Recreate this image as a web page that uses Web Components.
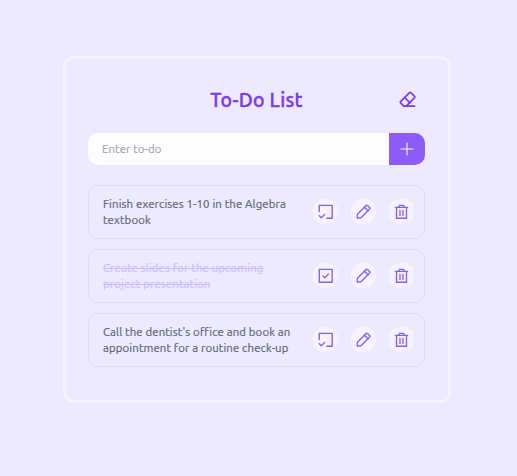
<!DOCTYPE html>
<html lang="en"><head><meta charset="utf-8"><title>To-Do List</title>
<style>body{margin:0;background:#ede9fe;font-family:Ubuntu,"Noto Sans","Open Sans",sans-serif}</style></head>
<body><todo-app></todo-app>
<script>
const icons={
open:'<path d="M2.3 8.5V2.3H15.2V15.2H9.8"/><path d="M2.3 12.8L4.3 14.7L7.6 11.5"/>',
done:'<path d="M2.3 2.3H15.2V15.2H2.3Z"/><path d="M5.9 8.9L7.8 10.7L11.5 7"/>',
edit:'<path d="M2.2 15L2.4 11.2L11.1 2.5Q11.8 1.8 12.5 2.5L14.7 4.7Q15.4 5.4 14.7 6.1L6 14.8Z"/><path d="M9.4 4.2L13 7.8"/>',
trash:'<path d="M2.3 4.3H14.7M3.5 4.5V15.2H13.5V4.5M5.8 4.1L6.5 2.3H10.5L11.2 4.1M7 7.4V12.4M10 7.4V12.4"/>',
erase:'<path d="M4.8 15.1L1.8 12.1Q.9 11.2 1.8 10.3L10.3 1.8Q11.2 .9 12.1 1.8L15.4 5.1Q16.3 6 15.4 6.9L7.3 15.1Z"/><path d="M5.6 6.5L11 11.8M7.3 15.1H15.6"/>',
plus:'<path d="M8 2V14M2 8H14"/>'};
class GlyphIcon extends HTMLElement{
 connectedCallback(){this.attachShadow({mode:'open'}).innerHTML=`<style>:host{display:block;width:17px;height:17px}svg{display:block;width:100%;height:100%;fill:none;stroke:currentColor;stroke-width:var(--stroke,1.35);stroke-linecap:round;stroke-linejoin:round}</style><svg viewBox="0 0 17 17">${icons[this.getAttribute('name')]}</svg>`}
}
customElements.define('glyph-icon',GlyphIcon);
class TextLine extends HTMLElement{
 connectedCallback(){
  this.attachShadow({mode:'open'}).innerHTML='<style>:host{display:block;width:max-content;white-space:nowrap}span{text-decoration:inherit}</style><span><slot></slot></span>';
  const natural=this.getBoundingClientRect().width,count=this.textContent.length;
  this.style.letterSpacing=(this.getAttribute('measure')-natural)/count+'px';
 }
}
customElements.define('text-line',TextLine);
class TodoItem extends HTMLElement{
 connectedCallback(){const done=this.hasAttribute('done');
 this.attachShadow({mode:'open'}).innerHTML=`<style>
 :host{display:flex;box-sizing:border-box;height:54px;border:1px solid #dfd9fe;border-radius:10px;align-items:center;justify-content:space-between;padding:0 10px 0 14px}
 .copy{padding-top:1.2px;font-size:11.4px;line-height:16.5px;-webkit-text-stroke:.2px currentColor;color:${done?'#cdbdfc':'#5b667b'};${done?'text-decoration:line-through;':''}}
 .actions{display:flex;gap:13.25px;color:#8b5cf6}
 button{all:unset;width:25px;height:25px;border-radius:11px;background:#f5f3ff;display:grid;place-items:center}
 button:first-child{margin-right:-.2px}
 </style><div class="copy"><slot></slot></div><div class="actions"><button aria-label="Toggle"><glyph-icon name="${done?'done':'open'}"></glyph-icon></button><button aria-label="Edit"><glyph-icon name="edit"></glyph-icon></button><button aria-label="Delete"><glyph-icon name="trash"></glyph-icon></button></div>`}
}
customElements.define('todo-item',TodoItem);
class TodoApp extends HTMLElement{
 connectedCallback(){this.attachShadow({mode:'open'}).innerHTML=`<style>
 :host{display:block;padding:56px 66px 0 63px}
 main{box-sizing:border-box;height:347px;border:3px solid #f5f3ff;border-radius:11px;padding:25.5px 23px 0 22px}
 header{height:30px;display:grid;grid-template-columns:1fr auto 1fr;align-items:center;color:#7c3aed}
 h1{grid-column:2;margin:0;font-size:19.5px;line-height:28px;font-weight:500;-webkit-text-stroke:.4px currentColor}
 header glyph-icon{justify-self:end;margin-right:9px;--stroke:1.7}
 .entry{display:flex;height:32px;margin-top:18.5px;border-radius:10px;overflow:hidden;background:#fdfdff}
 .field{flex:1;padding:0 0 1px 14px;display:flex;align-items:center;font-size:11.4px;color:#9ca3af;-webkit-text-stroke:.15px currentColor}
 .add{width:36px;display:grid;place-items:center;background:#8b5cf6;color:#f5f3ff;--stroke:1.15}
 .list{display:grid;gap:10px;margin-top:19.8px}
 </style><main><header><h1><text-line measure="92.5">To-Do List</text-line></h1><glyph-icon name="erase"></glyph-icon></header>
 <div class="entry"><div class="field"><text-line measure="59.5">Enter to-do</text-line></div><div class="add"><glyph-icon name="plus"></glyph-icon></div></div>
 <div class="list"><todo-item><text-line measure="183">Finish exercises 1-10 in the Algebra</text-line><text-line measure="48">textbook</text-line></todo-item>
 <todo-item done><text-line measure="160.5">Create slides for the upcoming</text-line><text-line measure="107.5">project presentation</text-line></todo-item>
 <todo-item><text-line measure="187">Call the dentist's office and book an</text-line><text-line measure="185.5">appointment for a routine check-up</text-line></todo-item></div></main>`}
}
customElements.define('todo-app',TodoApp);
</script></body></html>
